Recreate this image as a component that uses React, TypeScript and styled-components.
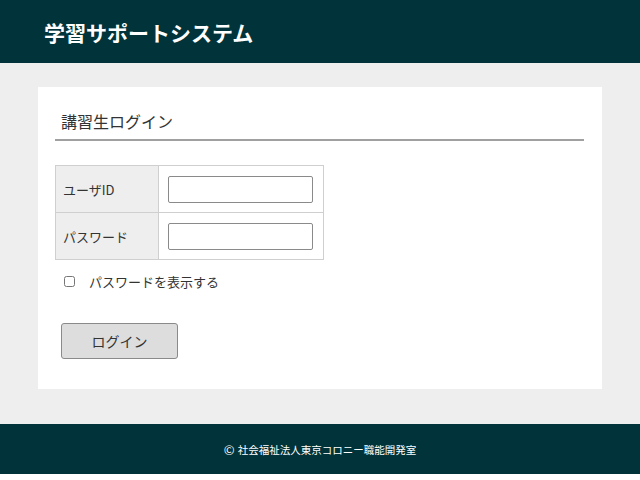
import React, { useState } from 'react'
import styled, { createGlobalStyle } from 'styled-components'

const GlobalStyle = createGlobalStyle`
  html, body {
    margin: 0;
    padding: 0;
    background: #ffffff;
  }
  body {
    font-family: "Noto Sans CJK JP", "Noto Sans", sans-serif;
    color: #333;
  }
`

const Page = styled.div`
  display: flex;
  flex-direction: column;
  width: 640px;
`

const Header = styled.header`
  height: 63px;
  background: #01343a;
  display: flex;
  align-items: center;
  padding-left: 44px;
`

const SiteTitle = styled.h1`
  margin: 0;
  color: #ffffff;
  font-size: 21px;
  font-weight: 700;
`

const Main = styled.main`
  background: #eeeeee;
  padding: 24px 38px 35px;
`

const Card = styled.section`
  background: #ffffff;
  height: 302px;
  box-sizing: border-box;
  padding: 20px 18px 0 17px;
`

const CardTitle = styled.h2`
  margin: 0;
  font-size: 16px;
  font-weight: 400;
  color: #333;
  padding: 0 0 4px 6px;
  line-height: 28px;
  border-bottom: 2px solid #a0a0a0;
`

const FormTable = styled.table`
  margin-top: 24px;
  border-collapse: collapse;
  font-size: 13px;
`

const LabelCell = styled.th`
  width: 103px;
  height: 47px;
  box-sizing: border-box;
  background: #eeeeee;
  border: 1px solid #cfcfcf;
  text-align: left;
  font-weight: 400;
  padding: 0 0 0 7px;
  color: #333;
`

const FieldCell = styled.td`
  width: 145px;
  border: 1px solid #cfcfcf;
  padding: 0 10px 0 9px;
`

const TextInput = styled.input`
  display: block;
  width: 145px;
  height: 27px;
  box-sizing: border-box;
  border: 1px solid #8a8a8a;
  border-radius: 2px;
  font-size: 13px;
  padding: 2px 4px;
`

const CheckRow = styled.label`
  display: flex;
  align-items: center;
  margin: 12px 0 0 9px;
  font-size: 13px;
  color: #333;
`

const Check = styled.input`
  width: 11px;
  height: 11px;
  margin: 0 14px 0 0;
`

const LoginButton = styled.button`
  margin: 32px 0 0 6px;
  width: 117px;
  height: 36px;
  background: #dddddd;
  border: 1px solid #8a8a8a;
  border-radius: 3px;
  font-family: "Noto Sans CJK JP", sans-serif;
  font-size: 14px;
  color: #333;
  cursor: pointer;
`

const Footer = styled.footer`
  height: 50px;
  background: #01343a;
  display: flex;
  align-items: center;
  justify-content: center;
  color: #ffffff;
  font-size: 10.5px;
`

const Copy = styled.span`
  font-size: 13px;
  margin-right: 3px;
`

export default function App() {
  const [show, setShow] = useState(false)

  return (
    <Page>
      <GlobalStyle />
      <Header>
        <SiteTitle>学習サポートシステム</SiteTitle>
      </Header>
      <Main>
        <Card>
          <CardTitle>講習生ログイン</CardTitle>
          <FormTable>
            <tbody>
              <tr>
                <LabelCell>ユーザID</LabelCell>
                <FieldCell>
                  <TextInput type="text" />
                </FieldCell>
              </tr>
              <tr>
                <LabelCell>パスワード</LabelCell>
                <FieldCell>
                  <TextInput type={show ? 'text' : 'password'} />
                </FieldCell>
              </tr>
            </tbody>
          </FormTable>
          <CheckRow>
            <Check type="checkbox" checked={show} onChange={() => setShow(!show)} />
            パスワードを表示する
          </CheckRow>
          <LoginButton type="button">ログイン</LoginButton>
        </Card>
      </Main>
      <Footer>
        <Copy>©</Copy>社会福祉法人東京コロニー職能開発室
      </Footer>
    </Page>
  )
}
